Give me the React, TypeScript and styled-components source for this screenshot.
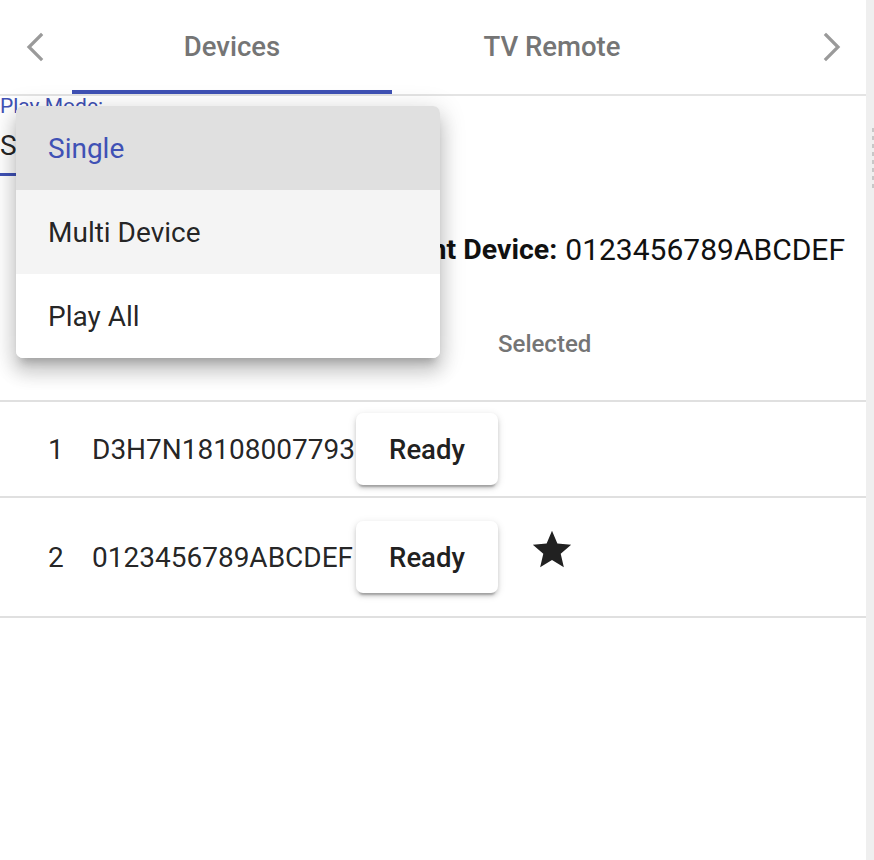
import React from "react";
import styled, { createGlobalStyle } from "styled-components";

const Global = createGlobalStyle`
  html, body { margin: 0; padding: 0; background: #fff; }
  body { font-family: Roboto, "Liberation Sans", Arial, sans-serif; color: rgba(0,0,0,0.87); }
  * { box-sizing: border-box; }
`;

const Page = styled.div`
  display: flex;
  width: 874px;
  height: 860px;
  overflow: hidden;
`;

const Main = styled.div`
  position: relative;
  width: 866px;
  display: flex;
  flex-direction: column;
`;

const ScrollStrip = styled.div`
  width: 8px;
  background: #efefef;
  display: flex;
  justify-content: flex-end;
  padding-top: 128px;
`;

const Grip = styled.div`
  width: 2px;
  height: 60px;
  background: repeating-linear-gradient(
    to bottom,
    #c8c8c8 0px,
    #c8c8c8 4px,
    transparent 4px,
    transparent 8px
  );
`;

const TabBar = styled.div`
  display: flex;
  height: 96px;
  border-bottom: 2px solid #e4e4e4;
`;

const ScrollButton = styled.div<{ $side: "left" | "right" }>`
  width: ${(p) => (p.$side === "left" ? "72px" : "70px")};
  display: flex;
  align-items: center;
  justify-content: center;
  margin-left: ${(p) => (p.$side === "right" ? "auto" : "0")};
`;

const Tab = styled.div<{ $active?: boolean }>`
  width: 320px;
  display: flex;
  align-items: center;
  justify-content: center;
  font-size: 27.5px;
  font-weight: 500;
  color: #757575;
  border-bottom: 4px solid ${(p) => (p.$active ? "#3f51b5" : "transparent")};
  padding-top: 2px;
`;

const Content = styled.div`
  display: flex;
  flex-direction: column;
`;

const Label = styled.div`
  font-size: 21px;
  line-height: 21px;
  color: #3f51b5;
  height: 21px;
`;

const SelectBox = styled.div`
  width: 210px;
  height: 59px;
  display: flex;
  align-items: center;
  font-size: 28px;
  color: rgba(0,0,0,0.87);
  border-bottom: 3px solid #3f51b5;
`;

const CurrentDevice = styled.div`
  margin-top: 36px;
  height: 74px;
  display: flex;
  align-items: center;
  justify-content: flex-end;
  padding-right: 21px;
  font-size: 30px;
  color: #111;
  white-space: nowrap;
`;

const DeviceLabel = styled.b`
  font-weight: 700;
  font-size: 28.5px;
  margin-right: 8px;
`;

const Row = styled.div<{ $h: number }>`
  display: grid;
  grid-template-columns: 92px 264px 142px 1fr;
  align-items: center;
  height: ${(p) => p.$h}px;
  border-bottom: 2px solid #e0e0e0;
`;

const HeadCell = styled.div`
  font-size: 24px;
  font-weight: 500;
  color: #757575;
  padding-top: 2px;
`;

const NumCell = styled.div`
  padding-left: 48px;
  font-size: 28px;
`;

const TextCell = styled.div`
  font-size: 28px;
  white-space: nowrap;
`;

const ReadyButton = styled.div`
  width: 142px;
  height: 72px;
  border-radius: 7px;
  background: #fff;
  display: flex;
  align-items: center;
  justify-content: center;
  font-size: 27.5px;
  font-weight: 500;
  color: #212121;
  box-shadow: 0 5px 2px -3px rgba(0,0,0,0.22), 0 3px 4px 0 rgba(0,0,0,0.14), 0 2px 9px 0 rgba(0,0,0,0.12);
`;

const StarCell = styled.div`
  padding-left: 31px;
  display: flex;
  align-items: center;
  margin-bottom: 14px;
`;

const Menu = styled.div`
  position: absolute;
  top: 106px;
  left: 16px;
  width: 424px;
  background: #fff;
  border-radius: 7px;
  overflow: hidden;
  box-shadow: 0 9px 9px -5px rgba(0,0,0,0.2), 0 14px 18px 2px rgba(0,0,0,0.14), 0 5px 25px 4px rgba(0,0,0,0.12);
`;

const MenuItem = styled.div<{ $bg: string; $color: string }>`
  height: 84px;
  display: flex;
  align-items: center;
  padding-left: 32px;
  font-size: 28px;
  background: ${(p) => p.$bg};
  color: ${(p) => p.$color};
`;

const Chevron = ({ dir }: { dir: "left" | "right" }) => (
  <svg width="20" height="30" viewBox="0 0 20 30">
    <polyline
      points={dir === "left" ? "15,3 3,15 15,27" : "5,3 17,15 5,27"}
      fill="none"
      stroke="#9a9a9a"
      strokeWidth="3.2"
      strokeLinecap="square"
    />
  </svg>
);

const Star = () => (
  <svg width="46" height="46" viewBox="0 0 24 24">
    <path
      fill="#212121"
      d="M12 17.27 18.18 21l-1.64-7.03L22 9.24l-7.19-.61L12 2 9.19 8.63 2 9.24l5.46 4.73L5.82 21z"
    />
  </svg>
);

const devices = [
  { n: 1, id: "D3H7N18108007793", selected: false, h: 96 },
  { n: 2, id: "0123456789ABCDEF", selected: true, h: 120 },
];

export default function App() {
  return (
    <>
      <Global />
      <Page>
        <Main>
          <TabBar>
            <ScrollButton $side="left">
              <Chevron dir="left" />
            </ScrollButton>
            <Tab $active>Devices</Tab>
            <Tab>TV Remote</Tab>
            <ScrollButton $side="right">
              <Chevron dir="right" />
            </ScrollButton>
          </TabBar>
          <Content>
            <Label>Play Mode:</Label>
            <SelectBox>Single</SelectBox>
            <CurrentDevice>
              <DeviceLabel>Current Device:</DeviceLabel>0123456789ABCDEF
            </CurrentDevice>
            <Row $h={116}>
              <HeadCell />
              <HeadCell />
              <HeadCell />
              <HeadCell>Selected</HeadCell>
            </Row>
            {devices.map((d) => (
              <Row key={d.n} $h={d.h}>
                <NumCell>{d.n}</NumCell>
                <TextCell>{d.id}</TextCell>
                <ReadyButton>Ready</ReadyButton>
                <StarCell>{d.selected && <Star />}</StarCell>
              </Row>
            ))}
          </Content>
          <Menu>
            <MenuItem $bg="#e0e0e0" $color="#3f51b5">Single</MenuItem>
            <MenuItem $bg="#f4f4f4" $color="rgba(0,0,0,0.87)">Multi Device</MenuItem>
            <MenuItem $bg="#ffffff" $color="rgba(0,0,0,0.87)">Play All</MenuItem>
          </Menu>
        </Main>
        <ScrollStrip>
          <Grip />
        </ScrollStrip>
      </Page>
    </>
  );
}
